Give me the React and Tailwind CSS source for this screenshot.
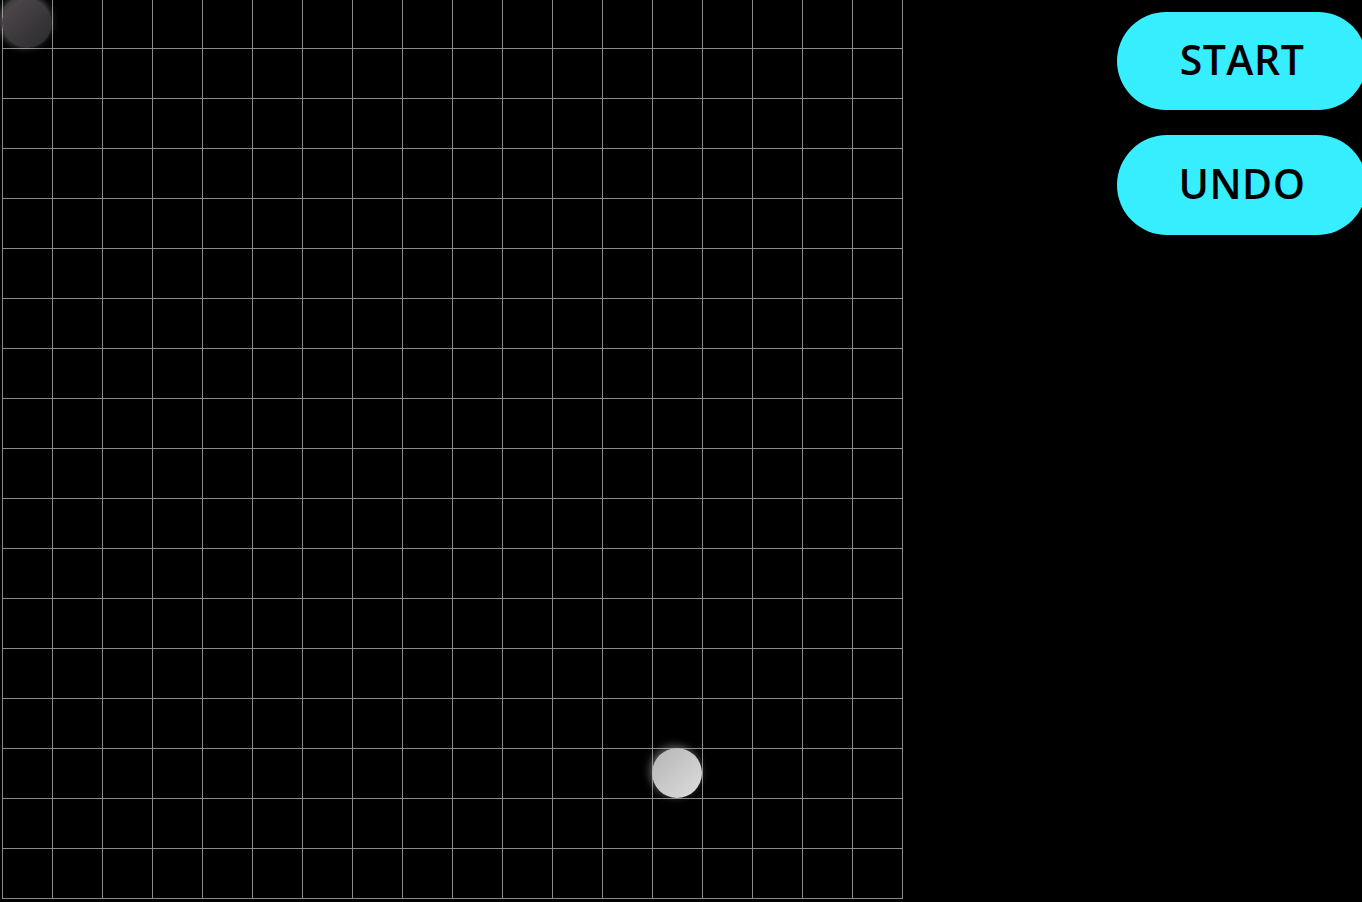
import React from "react";

const cells = Array.from({ length: 18 * 18 }, (_, i) => i);

const stones = [
  { r: 0, c: 0, color: "black" },
  { r: 15, c: 13, color: "white" },
];

export default function App() {
  return (
    <div className="w-full h-[902px] bg-black overflow-hidden flex items-start" style={{ fontFamily: '"Open Sans", "Noto Sans", sans-serif' }}>
      <div className="relative ml-[2px] -mt-[2px] border-r border-b border-[#8a8a8a]">
        <div className="grid grid-cols-[repeat(18,50px)]">
          {cells.map((i) => (
            <div key={i} className="w-[50px] h-[50px] border-l border-t border-[#8a8a8a]" />
          ))}
        </div>
        {stones.map((s, i) => (
          <div
            key={i}
            className={
              s.color === "black"
                ? "absolute w-[50px] h-[50px] rounded-full bg-gradient-to-br from-[#524b50] to-[#2a292b] shadow-[-2px_-2px_8px_rgba(200,200,200,0.55)]"
                : "absolute w-[50px] h-[50px] rounded-full bg-gradient-to-br from-[#b4b4b4] to-[#dedede] shadow-[-2px_-2px_8px_rgba(200,200,200,0.5)]"
            }
            style={{ left: s.c * 50, top: s.r * 50 }}
          />
        ))}
      </div>
      <div className="ml-auto mr-[-5px] mt-[12px] flex flex-col gap-[25px]">
        <button className="w-[250px] h-[98px] rounded-full bg-[#36eefd] text-black text-[41px] font-semibold leading-none tracking-[0.5px] pb-[4px]">
          START
        </button>
        <button className="w-[250px] h-[100px] rounded-full bg-[#36eefd] text-black text-[41px] font-semibold leading-none tracking-[0.5px] pb-[4px]">
          UNDO
        </button>
      </div>
    </div>
  );
}
